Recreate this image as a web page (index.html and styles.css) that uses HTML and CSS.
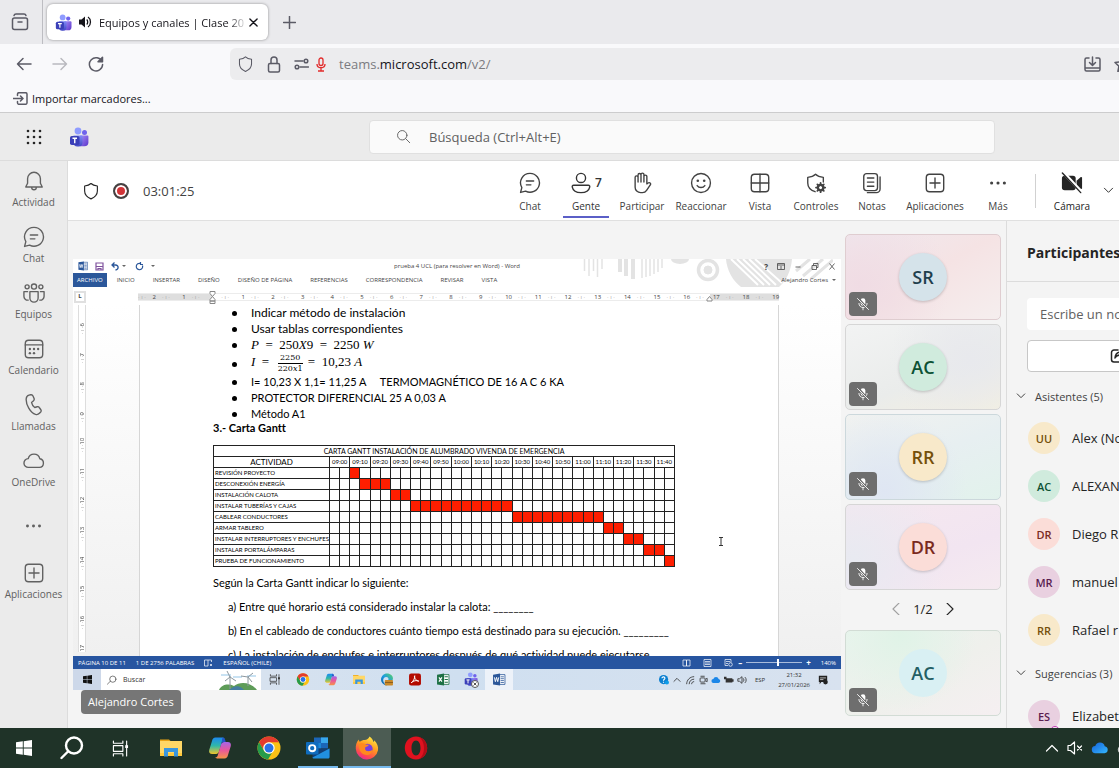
FILE: index.html
```html
<!DOCTYPE html>
<html lang="es">
<head>
<meta charset="utf-8">
<title>Equipos y canales | Clase</title>
<link rel="stylesheet" href="styles.css">
</head>
<body>
<svg class="sprite" aria-hidden="true">
  <defs>
    <linearGradient id="gTeams" x1="0" y1="0" x2="0" y2="1"><stop offset="0" stop-color="#7f8bf5"/><stop offset="1" stop-color="#4046c4"/></linearGradient>
    <linearGradient id="gPurple" x1="0" y1="0" x2="1" y2="1"><stop offset="0" stop-color="#a48cf8"/><stop offset="1" stop-color="#5b35c9"/></linearGradient>
    <linearGradient id="gCop1" x1="0" y1="0" x2="0" y2="1"><stop offset="0" stop-color="#1c8af0"/><stop offset=".5" stop-color="#2fb8a8"/><stop offset="1" stop-color="#f0c52c"/></linearGradient>
    <linearGradient id="gCop2" x1="0" y1="0" x2="0" y2="1"><stop offset="0" stop-color="#a565e8"/><stop offset=".5" stop-color="#e8589a"/><stop offset="1" stop-color="#f79447"/></linearGradient>
    <linearGradient id="gFire" x1=".8" y1="0" x2=".3" y2="1"><stop offset="0" stop-color="#fff04a"/><stop offset=".45" stop-color="#ff9a1f"/><stop offset=".8" stop-color="#ff4a4f"/><stop offset="1" stop-color="#e8269b"/></linearGradient>
    <linearGradient id="gEdge" x1="0" y1="1" x2="1" y2="0"><stop offset="0" stop-color="#0c59a4"/><stop offset=".5" stop-color="#1b9de2"/><stop offset="1" stop-color="#5fd65a"/></linearGradient>
    <linearGradient id="gCloud" x1="0" y1="0" x2="1" y2="1"><stop offset="0" stop-color="#1560d8"/><stop offset="1" stop-color="#35b8ff"/></linearGradient>
  </defs>
  <symbol id="i-teams" viewBox="0 0 20 20"><circle cx="15.500" cy="5.400" r="2.500" fill="#6f63ec"/><path d="M11 8.600h7.400c.6 0 1 .4 1 1v5.600a4 4 0 0 1-4 4H11z" fill="url(#gPurple)"/><circle cx="9" cy="4" r="3.400" fill="#8f9cff"/><path d="M4.500 8.600h8c.6 0 1 .4 1 1v6a4 4 0 0 1-4 4h-1a4 4 0 0 1-4-4z" fill="url(#gTeams)"/><rect x="1" y="9" width="9.500" height="9" rx="1.800" fill="#3a3fb8"/><path d="M3.500 11.300h4.500M5.750 11.300v5" stroke="#fff" stroke-width="1.400"/></symbol>
  <symbol id="i-bell" viewBox="0 0 24 24"><path d="M12 2.500a7 7 0 0 0-7 7v5L3 18.500h18l-2-4v-5a7 7 0 0 0-7-7zM9.500 19a2.500 2.500 0 0 0 5 0"/></symbol>
  <symbol id="i-chat" viewBox="0 0 24 24"><path d="M12 1.500A10.300 10.300 0 1 1 7.200 20.900L1.700 22.300l1.400-5.300A10.300 10.300 0 0 1 12 1.500zM8 9.800h8M8 14h5"/></symbol>
  <symbol id="i-people" viewBox="0 0 24 24"><circle cx="12" cy="5" r="2.800"/><circle cx="4.500" cy="5.300" r="2.200"/><circle cx="19.500" cy="5.300" r="2.200"/><path d="M7.500 10.500h9v7a4.500 4.500 0 0 1-9 0zM5 10.500H1v5a4.300 4.300 0 0 0 4.700 4.300M19 10.500h4v5a4.300 4.300 0 0 1-4.700 4.300"/></symbol>
  <symbol id="i-cal" viewBox="0 0 24 24"><rect x="2.500" y="2.500" width="19" height="19" rx="3.500"/><path d="M2.500 7.500h19"/><g fill="currentColor" stroke="none"><circle cx="7.500" cy="12" r="1.300"/><circle cx="12" cy="12" r="1.300"/><circle cx="16.500" cy="12" r="1.300"/><circle cx="7.500" cy="16.500" r="1.300"/><circle cx="12" cy="16.500" r="1.300"/></g></symbol>
  <symbol id="i-phone" viewBox="0 0 24 24"><path d="M6.500 1.300 8.500.8c1.200-.2 2 .4 2.400 1.300l1.200 2.900c.3.900.1 1.700-.6 2.300L9.300 9.200c.4 2 1.800 4.300 3.500 5.500l2.700-.8c.9-.2 1.700 0 2.200.8l1.800 2.500c.5.800.4 1.700-.2 2.400l-1.400 1.500c-1.100 1.200-2.700 1.600-4.200 1.200C8 20.500 3 11.500 3.500 5.200c.2-2 1.300-3.500 3-3.900z"/></symbol>
  <symbol id="i-cloud" viewBox="0 0 24 24"><path d="M6 19a4.800 4.800 0 0 1-.3-9.600A6.500 6.500 0 0 1 18.300 9.500 4.800 4.800 0 0 1 18 19z"/></symbol>
  <symbol id="i-more" viewBox="0 0 24 24"><g fill="currentColor" stroke="none"><circle cx="3.500" cy="12" r="2.100"/><circle cx="12" cy="12" r="2.100"/><circle cx="20.500" cy="12" r="2.100"/></g></symbol>
  <symbol id="i-plusbox" viewBox="0 0 24 24"><rect x="2.500" y="2.500" width="19" height="19" rx="3.500"/><path d="M12 6.500v11M6.500 12h11"/></symbol>
  <symbol id="i-person" viewBox="0 0 24 24"><circle cx="12" cy="6.500" r="5"/><path d="M4 14.500h16c1.300 0 1.800 1 1.500 2-.8 4-4.800 6-9.500 6s-8.700-2-9.500-6c-.3-1 .2-2 1.500-2z"/></symbol>
  <symbol id="i-hand" viewBox="0 0 24 24"><path d="M4.500 13V5.800a1.600 1.600 0 0 1 3.200 0V11 3.300a1.600 1.600 0 0 1 3.200 0V11 2.800a1.600 1.600 0 0 1 3.200 0V11 5a1.600 1.600 0 0 1 3.200 0V13l1.300-1c1.200-1 3.200 0 2.800 1.500L17 20a5.500 5.500 0 0 1-4.500 2.500h-2a6 6 0 0 1-6-6z"/></symbol>
  <symbol id="i-smile" viewBox="0 0 24 24"><circle cx="12" cy="12" r="10.300"/><path d="M7.800 14.800c2 2.800 6.400 2.800 8.400 0"/><g fill="currentColor" stroke="none"><circle cx="8.500" cy="9.500" r="1.400"/><circle cx="15.500" cy="9.500" r="1.400"/></g></symbol>
  <symbol id="i-grid" viewBox="0 0 24 24"><rect x="2.500" y="2.500" width="19" height="19" rx="3.500"/><path d="M12 2.500v19M2.500 12h19"/></symbol>
  <symbol id="i-shield" viewBox="0 0 24 24"><path d="M12 2c2 2 5 3 8.500 3.300V12c0 5.500-4 8.500-8.500 10.500C7.500 20.500 3.500 17.500 3.500 12V5.300C7 5 10 4 12 2z"/></symbol>
  <symbol id="i-shieldgear" viewBox="0 0 24 24"><path d="M11 21.500C6.500 20 3 17 3 12V5.800C6.500 5.500 9.500 4.500 11.500 2.500c2 2 5 3 8.500 3.300V11"/><circle cx="17" cy="17" r="3" stroke-width="2.600"/><path stroke-width="2" d="M17 12v2m0 6v2m-5-5h2m6 0h2m-8.500-3.500 1.500 1.500m4 4 1.500 1.500m0-7-1.500 1.500m-4 4-1.500 1.500"/></symbol>
  <symbol id="i-notes" viewBox="0 0 24 24"><rect x="3" y="1.800" width="15" height="18.500" rx="3"/><path d="M7 6.500h7M7 11h7M7 15.500h7M20.800 5.500v13a4 4 0 0 1-4 4H7"/></symbol>
  <symbol id="i-camoff" viewBox="0 0 24 24"><rect x="1" y="4" width="15" height="16" rx="3" fill="currentColor" stroke="none"/><path d="m17 9.500 4.600-4c.6-.4 1.400 0 1.400.7v11.600c0 .7-.8 1.100-1.400.7l-4.600-4z" fill="currentColor" stroke="none"/><path d="m3.500 1.500 19.500 21" stroke="#fff" stroke-width="3.500"/><path d="m1.500 1 20 21.500"/></symbol>
  <symbol id="i-chev" viewBox="0 0 12 12"><path d="m1.500 3.500 4.500 4.500 4.500-4.500"/></symbol>
  <symbol id="i-search" viewBox="0 0 24 24"><circle cx="10" cy="10" r="7.500"/><path d="m15.500 15.500 6.500 6.500"/></symbol>
  <symbol id="i-micoff" viewBox="0 0 24 24"><rect x="8" y="2" width="8" height="13" rx="4" fill="currentColor" stroke="none"/><path d="M5 11c0 4 3 7 7 7s7-3 7-7M12 18v4"/><path d="m3.500 2 18 20" stroke="#6e6e6e" stroke-width="4"/><path d="m2.500 2.500 19 19"/></symbol>
  <symbol id="i-win" viewBox="0 0 16 16"><path fill="currentColor" stroke="none" d="M0 2.200 6.800 1.300v6.300H0zM7.700 1.200 16 0v7.600H7.700zM0 8.400h6.800v6.300L0 13.800zM7.700 8.400H16V16l-8.300-1.200z"/></symbol>
  <symbol id="i-taskview" viewBox="0 0 18 18"><path d="M1.500 1v2.500h10V1M1.500 17v-2.500h10V17M1.500 6h10v6h-10zM15.500 1v16"/><path fill="currentColor" stroke="none" d="M14 5.500h3v3h-3z"/></symbol>
  <symbol id="i-folder" viewBox="0 0 24 24"><path fill="#e9a315" d="M1 3.500h9l2 2H1z"/><path fill="#ffd766" d="M1 5h22v15H1z"/><path fill="#ffc93c" d="M1 17h22v3H1z"/><path fill="#3a96dd" d="M5 12h14v8.500h-4V16H9v4.500H5z"/></symbol>
  <symbol id="i-copilot" viewBox="0 0 24 24"><path fill="url(#gCop1)" d="M15 1.500H7.500C5.500 1.500 4.500 3 4 5L1.200 14c-.6 2.600.8 4 3 4H8c1.500 0 2.500-1 3-2.500l3-10C14.400 4 14.500 2.500 17 2.500z"/><path fill="url(#gCop2)" d="M9 22.500h7.500c2 0 3-1.500 3.500-3.500l2.800-9c.6-2.600-.8-4-3-4H16c-1.500 0-2.500 1-3 2.500l-3 10c-.4 1.500-.5 3-3 3z"/><path fill="#2454c8" d="M14.500 1.500c2 0 2.600 1.500 3.200 4.500H16c-1.300 0-2.200.9-2.700 2.300z"/></symbol>
  <symbol id="i-chrome" viewBox="0 0 24 24"><circle cx="12" cy="12" r="11.500" fill="#fbc116"/><path fill="#e33b2e" d="M2 6.300A11.500 11.500 0 0 1 22 6.300H12a5.700 5.700 0 0 0-5 8.500z"/><path fill="#259b4b" d="M2 6.300 7 14.800a5.700 5.700 0 0 0 8 1.900L11 23.500A11.500 11.500 0 0 1 2 6.300z"/><circle cx="12" cy="12" r="5.700" fill="#fff"/><circle cx="12" cy="12" r="4.500" fill="#2a72e8"/></symbol>
  <symbol id="i-outlook" viewBox="0 0 24 24"><path fill="#1b66b8" d="M8 1.500h14v11H8z"/><path fill="#38a8ec" d="M15 1.500h7v5.500h-7z"/><path fill="#1a87d7" d="M8 7h7v5.500H8z"/><path fill="#123f75" d="M6.500 12.500h17v9h-17z"/><path fill="#2190df" d="m6.500 21.500 17-9v8.500c0 .8-.5 1.500-1.500 1.500H8c-.9 0-1.500-.4-1.500-1z"/><rect x="0" y="6" width="12.500" height="12.500" rx="1" fill="#0f6cbd"/><circle cx="6.200" cy="12.200" r="3.100" fill="none" stroke="#fff" stroke-width="1.900"/></symbol>
  <symbol id="i-firefox" viewBox="0 0 24 24"><path fill="url(#gFire)" d="M14.500.5c3 2 3.500 4 4 5.500 0 0 .8-.5.700-1.800 3 3 4.300 6 3.800 10A11.200 11.200 0 0 1 .8 13c-.3-4 .7-7 3-9.500.2 1.500.6 2 1 2.300C6.500 4.500 8 4 9.500 4 12 4 13.500 2.500 14.500.5z"/><circle cx="12.500" cy="13" r="5.200" fill="#7540e0"/><path fill="#ff8a1e" d="M4 8.500c2-1.800 4.500-1.500 6-.5 1 .7 2.500.8 4 .8-1 1.700-2.500 2-3.500 2.200-1.200 2.500.5 4.200 2.800 4.200 2 0 3-.8 4.500-1.200-.5 3-3 5-6 5-4.500 0-8.300-4-7.800-10.500z"/></symbol>
  <symbol id="i-opera" viewBox="0 0 24 24"><path fill="#e0121f" fill-rule="evenodd" d="M12 .5C5.500.5.800 5.600.8 12S5.500 23.500 12 23.500 23.200 18.400 23.200 12 18.500.5 12 .5zm0 4c2.800 0 4.500 3.300 4.500 7.500s-1.700 7.500-4.500 7.500S7.500 16.200 7.500 12 9.200 4.500 12 4.500z"/><path fill="#b00c17" fill-rule="evenodd" d="M15 .9c4.700 1.300 8.200 5.800 8.200 11.100S19.700 21.800 15 23.100c3-2 5-6.200 5-11.100S18 2.900 15 .9z"/></symbol>
  <symbol id="i-edge" viewBox="0 0 24 24"><path fill="url(#gEdge)" d="M12 1C18.500 1 23 5.500 23 10c0 3.500-2.500 5.500-5.500 5.500-2.500 0-3.500-1-3.500-1.800 0-.7.8-1 .8-2.700 0-2-1.800-3.700-4.300-3.700-3.500 0-5.500 3-5.500 6.200 0 5 4 8.500 8 9.300C6 23 1 18 1 12S6 1 12 1z"/><rect x="8" y="13" width="15" height="10" rx="1.500" fill="#c98a2b"/><path fill="#7d5417" d="M8 17h15v1.500H8z"/></symbol>
  <symbol id="i-acrobat" viewBox="0 0 24 24"><rect x="1" y="1" width="22" height="22" rx="4" fill="#b30b00"/><path fill="none" stroke="#fff" stroke-width="1.800" d="M5 18c3-1 7.500-9 6.500-13-2 2 2 10 7.500 10-4-2-10-1-14 3z"/></symbol>
  <symbol id="i-excel" viewBox="0 0 24 24"><path fill="#fff" stroke="#1e7145" stroke-width="1.500" d="M12 3h11v18H12z"/><path stroke="#1e7145" stroke-width="2" d="M15 7h6M15 12h6M15 17h6"/><path fill="#1e7145" d="m1 3 13-2v22L1 21z"/><path stroke="#fff" stroke-width="2.200" d="m4.500 8 5.500 8m0-8-5.500 8"/></symbol>
  <symbol id="i-word" viewBox="0 0 24 24"><path fill="#fff" stroke="#2b579a" stroke-width="1.500" d="M12 3h11v18H12z"/><path stroke="#2b579a" stroke-width="1.500" d="M15 7h6M15 10.500h6M15 14h6M15 17.500h6"/><path fill="#2b579a" d="m1 3 13-2v22L1 21z"/><path fill="none" stroke="#fff" stroke-width="1.700" d="m3.500 8 1.800 8L7.500 8l2.200 8 1.800-8"/></symbol>
</svg>

<header class="browser">
  <div class="tabstrip">
    <button class="recent" aria-label="Pestañas recientes"><svg class="ln" width="18" height="18" viewBox="0 0 18 18"><rect x="1.500" y="5" width="15" height="11.500" rx="2"/><path d="M3 2.500C3.300 1.500 4 1 5 1h8c1 0 1.700.5 2 1.500M7 9h4"/></svg></button>
    <div class="tab">
      <svg width="17" height="17"><use href="#i-teams"/></svg>
      <svg class="sound" width="14" height="14" viewBox="0 0 14 14"><path fill="#15141a" d="M1 4.500h2.500L7 1.500v11L3.500 9.500H1z"/><path fill="none" stroke="#15141a" stroke-width="1.300" d="M8.700 4.500c1.300 1.200 1.300 3.800 0 5M10 2c3.300 2.200 3.300 7.800 0 10"/></svg>
      <span class="tab-title">Equipos y canales | Clase 20</span>
      <button class="tab-close" aria-label="Cerrar"><svg class="ln" width="9" height="9" viewBox="0 0 10 10"><path d="m1 1 8 8M9 1 1 9"/></svg></button>
    </div>
    <button class="newtab" aria-label="Nueva pestaña"><svg class="ln" width="13" height="13" viewBox="0 0 13 13"><path d="M6.500.5v12M.5 6.500h12"/></svg></button>
  </div>
  <div class="navbar">
    <button aria-label="Atrás"><svg class="ln" width="16" height="14" viewBox="0 0 16 14"><path d="M15 7H1.500M7 1.500 1.500 7 7 12.500"/></svg></button>
    <button class="off" aria-label="Adelante"><svg class="ln" width="16" height="14" viewBox="0 0 16 14"><path d="M1 7h13.500M9 1.500 14.500 7 9 12.500"/></svg></button>
    <button aria-label="Recargar"><svg class="ln" width="16" height="16" viewBox="0 0 16 16"><path d="M14 5.500A6.600 6.600 0 1 0 14.600 8.500"/><path fill="currentColor" d="M14.500 1.200v4.500H10z"/></svg></button>
    <div class="urlbar">
      <svg class="ln" width="17" height="18"><use href="#i-shield"/></svg>
      <svg class="ln" width="14" height="17" viewBox="0 0 14 17"><rect x="1.500" y="7.500" width="11" height="8.500" rx="1.500"/><path d="M4 7.500V4a3 3 0 0 1 6 0v3.500"/></svg>
      <svg class="ln" width="15" height="12" viewBox="0 0 15 12"><path d="M1 3h8M6 9h8.500"/><circle cx="12" cy="3" r="1.800"/><circle cx="3" cy="9" r="1.800"/></svg>
      <svg class="mic" width="10" height="15" viewBox="0 0 10 15"><rect x="3" y="1" width="4" height="7.500" rx="2"/><path d="M1 7c0 5 8 5 8 0M5 11v3M2 14h6"/></svg>
      <span class="url">teams.<b>microsoft.com</b>/v2/</span>
      <svg class="ln save" width="17" height="16" viewBox="0 0 17 16"><path d="M5 2H2.500A1.500 1.500 0 0 0 1 3.500v10A1.500 1.500 0 0 0 2.500 15h12a1.500 1.500 0 0 0 1.500-1.500v-10A1.500 1.500 0 0 0 14.500 2H12M1 12h15M8.500 1v8M5.500 6.500l3 3 3-3"/></svg>
      <svg class="ln" width="17" height="16" viewBox="0 0 17 16"><path d="m8.500 1 2.200 4.800 5.300.7-3.900 3.700 1 5.300-4.600-2.600-4.600 2.600 1-5.300L1 6.500l5.300-.7z"/></svg>
    </div>
  </div>
  <div class="bookmarks">
    <svg class="ln" width="15" height="13" viewBox="0 0 15 13"><path d="M4.500 3.500V2A1.500 1.500 0 0 1 6 .7h6.500A1.500 1.500 0 0 1 14 2v9a1.500 1.500 0 0 1-1.500 1.300H6A1.500 1.500 0 0 1 4.500 11V9.500M0 6.500h10M7.500 4 10 6.500 7.500 9"/></svg>
    <a href="#">Importar marcadores...</a>
  </div>
</header>

<div class="appbar">
  <button aria-label="Aplicaciones"><svg width="16" height="16" viewBox="0 0 16 16" fill="#242424"><circle cx="2" cy="2" r="1.300"/><circle cx="8" cy="2" r="1.300"/><circle cx="14" cy="2" r="1.300"/><circle cx="2" cy="8" r="1.300"/><circle cx="8" cy="8" r="1.300"/><circle cx="14" cy="8" r="1.300"/><circle cx="2" cy="14" r="1.300"/><circle cx="8" cy="14" r="1.300"/><circle cx="14" cy="14" r="1.300"/></svg></button>
  <svg class="logo" width="20" height="20"><use href="#i-teams"/></svg>
  <label class="search"><svg class="ln" width="15" height="15"><use href="#i-search"/></svg><input type="search" aria-label="Búsqueda" placeholder="Búsqueda (Ctrl+Alt+E)"></label>
</div>

<div class="app">
  <nav class="rail">
    <button><svg class="ln"><use href="#i-bell"/></svg>Actividad</button>
    <button><svg class="ln"><use href="#i-chat"/></svg>Chat</button>
    <button><svg class="ln"><use href="#i-people"/></svg>Equipos</button>
    <button><svg class="ln"><use href="#i-cal"/></svg>Calendario</button>
    <button><svg class="ln"><use href="#i-phone"/></svg>Llamadas</button>
    <button><svg class="ln"><use href="#i-cloud"/></svg>OneDrive</button>
    <button class="dots" aria-label="Más"><svg class="ln"><use href="#i-more"/></svg></button>
    <button><svg class="ln"><use href="#i-plusbox"/></svg>Aplicaciones</button>
  </nav>

  <div class="meeting">
    <div class="toolbar">
      <svg class="ln" width="18" height="18"><use href="#i-shield"/></svg>
      <span class="rec"></span>
      <span class="timer">03:01:25</span>
      <div class="actions">
        <button><svg class="ln"><use href="#i-chat"/></svg>Chat</button>
        <button class="current"><span><svg class="ln"><use href="#i-person"/></svg><b>7</b></span>Gente</button>
        <button><svg class="ln"><use href="#i-hand"/></svg>Participar</button>
        <button class="w62"><svg class="ln"><use href="#i-smile"/></svg>Reaccionar</button>
        <button><svg class="ln"><use href="#i-grid"/></svg>Vista</button>
        <button><svg class="ln"><use href="#i-shieldgear"/></svg>Controles</button>
        <button><svg class="ln"><use href="#i-notes"/></svg>Notas</button>
        <button class="w70"><svg class="ln"><use href="#i-plusbox"/></svg>Aplicaciones</button>
        <button><svg class="ln small"><use href="#i-more"/></svg>Más</button>
      </div>
      <div class="devices">
        <button class="cam"><svg class="ln"><use href="#i-camoff"/></svg>Cámara</button>
        <button class="open" aria-label="Opciones de cámara"><svg class="ln"><use href="#i-chev"/></svg></button>
      </div>
    </div>

    <div class="body">
      <main class="stage">
        <div class="share">
          <div class="word">
            <svg class="decor" viewBox="0 0 250 28" fill="none" stroke="#e3e3e3"><path stroke-width="1.500" d="M1.500 0v12M6 0v17M10.500 0v12M14.500 0v18M19 0v10"/><path stroke-width="4" d="M37 0v13M43 0v17M50 0v20"/><path stroke-width="1.500" d="M59 0v19M63 0v18M67 0v17M71 0v15M75 0v13M79 0v9"/><path fill="#e3e3e3" stroke="none" d="M88 0h18a9 5 0 0 1-18 0z"/><circle cx="125" cy="11" r="9.500" stroke-width="3.500"/><circle cx="125" cy="11" r="4" fill="#e3e3e3"/><path fill="#e3e3e3" stroke="none" d="M143 0h66c-1 12-6 22-13 28h-38c-8-6-14-16-15-28z"/><path stroke="#fff" stroke-width="2" d="m148 0 27 26M154 0l27 26M160 0l27 26M166 0l27 26M172 0l27 24"/><path stroke-width="3" d="m213 12 14-12M220 17l20-17M228 20l22-19"/></svg>
            <div class="titlebar">
              <div class="quick">
                <svg width="10" height="10"><use href="#i-word"/></svg>
                <svg width="9" height="9" viewBox="0 0 9 9"><path fill="none" stroke="#80539e" stroke-width="1.200" d="M1 1h7v7H1zM1 4.500h7M3 8V6.500h3V8"/></svg>
                <svg width="8" height="9" viewBox="0 0 8 9"><path fill="none" stroke="#2b579a" stroke-width="1.300" d="M3.500.5 1 3l2.500 2.500M1 3h3.500c3.500 0 3.500 4.500 0 5"/></svg>
                <i class="caret"></i>
                <svg class="redo" width="9" height="9" viewBox="0 0 9 9"><path fill="none" stroke="#2b579a" stroke-width="1.200" d="M5.500 1.500a3.200 3.200 0 1 0 2 2M5.500 0v2.500h2.500"/></svg>
                <i class="caret"></i>
              </div>
              <span>prueba 4 UCL (para resolver en Word) - Word</span>
              <div class="winctl"><b>?</b><svg width="8" height="7" viewBox="0 0 8 7"><path d="M.5.5h7v6h-7zM.5 2h7M4 3v3"/></svg><svg width="8" height="7" viewBox="0 0 8 7"><path d="M1.500 4h5"/></svg><svg width="8" height="7" viewBox="0 0 8 7"><path d="M1 2.500h4.500v4H1zM2.500 2.500v-2H7v4H5.500"/></svg><svg width="8" height="7" viewBox="0 0 8 7"><path d="m1.500.5 5 6m0-6-5 6"/></svg></div>
            </div>
            <div class="ribbon"><b>ARCHIVO</b><span>INICIO</span><span>INSERTAR</span><span>DISEÑO</span><span>DISEÑO DE PÁGINA</span><span>REFERENCIAS</span><span>CORRESPONDENCIA</span><span>REVISAR</span><span>VISTA</span><span class="user">Alejandro Cortes</span><i class="caret"></i></div>
            <div class="hruler">
              <i class="tabstop">L</i>
              <ol><li class="part">2<li>1<li class="zero">&nbsp;<li>1<li>2<li>3<li>4<li>5<li>6<li>7<li>8<li>9<li>10<li>11<li>12<li>13<li>14<li>15<li>16<li>17<li>18<li>19</ol>
              <svg class="indent" width="7" height="13" viewBox="0 0 7 13"><path fill="#fff" stroke="#888" d="M1 .5h5v2L3.500 5.500 1 2.500zM1 10V8.500L3.500 5.500 6 8.500V10zM1 10h5v2.500H1z"/></svg>
              <svg class="indent right" width="7" height="13" viewBox="0 0 7 13"><path fill="#fff" stroke="#888" d="M1 10V8.500L3.500 5.500 6 8.500V10z"/></svg>
            </div>
            <div class="canvas">
              <ol class="vruler"><li>6<li>7<li>8<li>9<li>10<li>11<li>12<li>13<li>14<li>15<li>16<li>17</ol>
              <article class="page">
                <ul>
                  <li class="big">Indicar método de instalación</li>
                  <li class="big">Usar tablas correspondientes</li>
                  <li><span class="math"><em>P</em> &nbsp;=&nbsp; 250<em>X</em>9 &nbsp;=&nbsp; 2250 <em>W</em></span></li>
                  <li class="tall"><span class="math"><em>I</em> &nbsp;=&nbsp; <span class="frac"><span>2250</span><span>220<em>x</em>1</span></span> = &nbsp;10,23 <em>A</em></span></li>
                  <li>I= 10,23 X 1,1= 11,25 A &nbsp; &nbsp; TERMOMAGNÉTICO DE 16 A C 6 KA</li>
                  <li>PROTECTOR DIFERENCIAL 25 A 0,03 A</li>
                  <li>Método A1</li>
                </ul>
                <h3>3.- Carta Gantt</h3>
                <table class="gantt">
                  <colgroup><col class="name"><col span="34"></colgroup>
                  <thead>
                  <tr><th colspan="35">CARTA GANTT INSTALACIÓN DE ALUMBRADO VIVENDA DE EMERGENCIA</th></tr>
                  <tr class="hours"><th class="act">ACTIVIDAD<th colspan="2">09:00<th colspan="2">09:10<th colspan="2">09:20<th colspan="2">09:30<th colspan="2">09:40<th colspan="2">09:50<th colspan="2">10:00<th colspan="2">10:10<th colspan="2">10:20<th colspan="2">10:30<th colspan="2">10:40<th colspan="2">10:50<th colspan="2">11:00<th colspan="2">11:10<th colspan="2">11:20<th colspan="2">11:30<th colspan="2">11:40</tr>
                  </thead>
                  <tbody>
                  <tr><th>REVISIÓN PROYECTO<td><td><td class="r"><td><td><td><td><td><td><td><td><td><td><td><td><td><td><td><td><td><td><td><td><td><td><td><td><td><td><td><td><td><td><td></tr>
                  <tr><th>DESCONEXIÓN ENERGÍA<td><td><td><td class="r"><td class="r"><td class="r"><td><td><td><td><td><td><td><td><td><td><td><td><td><td><td><td><td><td><td><td><td><td><td><td><td><td><td><td></tr>
                  <tr><th>INSTALACIÓN CALOTA<td><td><td><td><td><td><td class="r"><td class="r"><td><td><td><td><td><td><td><td><td><td><td><td><td><td><td><td><td><td><td><td><td><td><td><td><td><td></tr>
                  <tr><th>INSTALAR TUBERÍAS Y CAJAS<td><td><td><td><td><td><td><td><td class="r"><td class="r"><td class="r"><td class="r"><td class="r"><td class="r"><td class="r"><td class="r"><td class="r"><td class="r"><td><td><td><td><td><td><td><td><td><td><td><td><td><td><td><td></tr>
                  <tr><th>CABLEAR CONDUCTORES<td><td><td><td><td><td><td><td><td><td><td><td><td><td><td><td><td><td><td class="r"><td class="r"><td class="r"><td class="r"><td class="r"><td class="r"><td class="r"><td class="r"><td class="r"><td><td><td><td><td><td><td></tr>
                  <tr><th>ARMAR TABLERO<td><td><td><td><td><td><td><td><td><td><td><td><td><td><td><td><td><td><td><td><td><td><td><td><td><td><td><td class="r"><td class="r"><td><td><td><td><td></tr>
                  <tr><th>INSTALAR INTERRUPTORES Y ENCHUFES<td><td><td><td><td><td><td><td><td><td><td><td><td><td><td><td><td><td><td><td><td><td><td><td><td><td><td><td><td><td class="r"><td class="r"><td><td><td></tr>
                  <tr><th>INSTALAR PORTALÁMPARAS<td><td><td><td><td><td><td><td><td><td><td><td><td><td><td><td><td><td><td><td><td><td><td><td><td><td><td><td><td><td><td><td class="r"><td class="r"><td></tr>
                  <tr><th>PRUEBA DE FUNCIONAMIENTO<td><td><td><td><td><td><td><td><td><td><td><td><td><td><td><td><td><td><td><td><td><td><td><td><td><td><td><td><td><td><td><td><td><td class="r"></tr>
                  </tbody>
                </table>
                <p>Según la Carta Gantt indicar lo siguiente:</p>
                <p class="q">a) Entre qué horario está considerado instalar la calota: ________</p>
                <p class="q">b) En el cableado de conductores cuánto tiempo está destinado para su ejecución. _________</p>
                <p class="q">c) La instalación de enchufes e interruptores después de qué actividad puede ejecutarse</p>
              </article>
              <svg class="ibeam" width="6" height="9" viewBox="0 0 6 9"><path fill="none" stroke="#333" d="M1 .5h4M3 .5v8M1 8.500h4"/></svg>
            </div>
            <div class="status">
              <span>PÁGINA 10 DE 11</span><span>1 DE 2756 PALABRAS</span>
              <svg width="9" height="8" viewBox="0 0 9 8"><path d="M.5 1h3.500v6H.5zM4 1h3.500v2M6 5l2 2m0-2L6 7"/></svg>
              <span>ESPAÑOL (CHILE)</span>
              <div class="views"><svg width="9" height="8" viewBox="0 0 9 8"><path d="M1 1h3.500v6H1zM4.500 1H8v6H4.500z"/></svg><svg width="9" height="8" viewBox="0 0 9 8"><path d="M1 .5h7v7H1zM2 2.500h5M2 4h5M2 5.500h5"/></svg><svg width="9" height="8" viewBox="0 0 9 8"><path d="M1 .5h6v3M1 .5v6h3M2 2.500h4M2 4.500h2"/><circle cx="6.500" cy="5.500" r="1.800"/></svg></div>
              <b>–</b><i class="zoom"></i><b>+</b><span class="pct">140%</span>
            </div>
            <div class="rtask">
              <span class="start"><svg width="9" height="9"><use href="#i-win"/></svg></span>
              <span class="rsearch"><svg class="ln" width="10" height="10" viewBox="0 0 24 24"><circle cx="14" cy="10" r="7.500"/><path d="m8 15-7 7"/></svg>Buscar
                <svg class="mill" width="40" height="19" viewBox="0 0 40 19"><path fill="#c9e2f3" d="M2 3h10v2H2zM14 5h9v2h-9zM28 4h9v2h-9z"/><path fill="#5e9c58" d="M0 19c2-5 9-7 15-4 6-5 17-4 23 4z"/><path fill="#447da1" d="M10 19c4-4 9-5 13-2l2 2z"/><path fill="none" stroke="#8c979e" d="M11 18V5M11 6 8 0M11 6l6 4M11 6 6 10M29 15V6M29 6l5-4M29 6l4 5M29 6l-7-1"/></svg></span>
              <span class="apps"><svg class="ln"><use href="#i-taskview"/></svg><svg><use href="#i-chrome"/></svg><svg><use href="#i-copilot"/></svg><svg><use href="#i-folder"/></svg><svg><use href="#i-edge"/></svg><svg><use href="#i-acrobat"/></svg><svg><use href="#i-excel"/></svg><svg viewBox="0 0 28 21"><use href="#i-teams" x="7" y="3" width="14" height="14"/><circle cx="18" cy="15" r="3.500" fill="#fff" stroke="#555"/><path stroke="#555" d="m16.500 13.500 3 3m0-3-3 3"/></svg><svg class="sel"><use href="#i-word"/></svg></span>
              <span class="tray">
                <svg viewBox="0 0 12 12"><circle cx="5.500" cy="5.500" r="5.500" fill="#0b7fd0"/><path fill="none" stroke="#fff" stroke-width="1.400" d="M3.500 4c0-2.500 4-2 3.500.2C6.700 5.300 5.400 5.200 5.400 7M5.400 8v1.200"/><circle cx="9.500" cy="9" r="2.500" fill="#0b9be8"/></svg>
                <svg viewBox="0 0 12 12"><path class="s" d="m2 8 4-4 4 4"/></svg>
                <svg viewBox="0 0 12 12"><path class="s" d="M2 11C2 6 6 2 11 2M5 11c0-3.500 2.500-6 6-6M8 11c0-2 1-3 3-3"/></svg>
                <svg viewBox="0 0 12 12"><rect class="s" x="2.500" y="3.500" width="6" height="5" rx="1"/><path class="s" d="M3 1.500h5M3 10.500h6M9 5l2-1v4L9 7"/></svg>
                <svg viewBox="0 0 24 24" fill="#1b86e8"><use href="#i-cloud"/></svg>
                <svg viewBox="0 0 12 12"><path fill="#333" d="M2 4h8v5H2zM10 5h1.500v3H10zM0 2h3v3H0z"/></svg>
                <svg viewBox="0 0 12 12"><path class="s" d="M1 4.500h2L6 2v8L3 7.500H1zM7.500 4c1 1 1 3 0 4M9.500 2.500c2 2 2 5 0 7"/></svg>
                <em>ESP</em><em class="clock">21:32<br>27/01/2026</em>
                <svg viewBox="0 0 12 12"><path fill="#222" d="M1 1h10v5L8 8.500H4L2 11V8.500H1z"/><path stroke="#fff" stroke-width=".8" d="M2.500 3.500h7M2.500 5.500h4"/><circle cx="9" cy="8.500" r="2.800" fill="#222"/></svg>
              </span>
            </div>
          </div>
          <span class="presenter">Alejandro Cortes</span>
        </div>
      </main>

      <aside class="tiles">
        <div class="tile t1"><span class="avatar sr">SR</span><i class="muted"><svg class="ln"><use href="#i-micoff"/></svg></i></div>
        <div class="tile t2"><span class="avatar ac">AC</span><i class="muted"><svg class="ln"><use href="#i-micoff"/></svg></i></div>
        <div class="tile t3"><span class="avatar rr">RR</span><i class="muted"><svg class="ln"><use href="#i-micoff"/></svg></i></div>
        <div class="tile t4"><span class="avatar dr">DR</span><i class="muted"><svg class="ln"><use href="#i-micoff"/></svg></i></div>
        <div class="pager"><button class="off" aria-label="Anterior"><svg class="ln" width="12" height="12" viewBox="0 0 12 12"><path d="M9 0 3 6l6 6"/></svg></button>1/2<button aria-label="Siguiente"><svg class="ln" width="12" height="12" viewBox="0 0 12 12"><path d="m3 0 6 6-6 6"/></svg></button></div>
        <div class="tile t5"><span class="avatar me">AC</span><i class="muted"><svg class="ln"><use href="#i-micoff"/></svg></i></div>
      </aside>

      <aside class="people">
        <h2>Participantes</h2>
        <div class="people-in">
          <input type="text" aria-label="Invitar" placeholder="Escribe un no">
          <button class="invite" aria-label="Compartir invitación"><svg class="ln" width="16" height="16" viewBox="0 0 16 16"><path d="M8 2H4a2.500 2.500 0 0 0-2.500 2.500v7A2.500 2.500 0 0 0 4 14h7.500a2.500 2.500 0 0 0 2.500-2.500V11M10.500 2l4 3.500-4 3.500V7C8 7 6 8 5 10c.3-3.500 2.500-6 5.500-6z"/></svg></button>
          <h4><svg class="ln"><use href="#i-chev"/></svg>Asistentes (5)</h4>
          <ul>
            <li><span class="avatar rr">UU</span>Alex (No</li>
            <li><span class="avatar ac">AC</span>ALEXAN</li>
            <li><span class="avatar dr">DR</span>Diego R</li>
            <li><span class="avatar mr">MR</span>manuel</li>
            <li><span class="avatar rr">RR</span>Rafael r</li>
          </ul>
          <h4><svg class="ln"><use href="#i-chev"/></svg>Sugerencias (3)</h4>
          <ul><li><span class="avatar mr">ES<i class="presence"></i></span>Elizabet</li></ul>
        </div>
      </aside>
    </div>
  </div>
</div>

<footer class="taskbar">
  <button aria-label="Inicio"><svg width="16" height="16"><use href="#i-win"/></svg></button>
  <button aria-label="Buscar"><svg class="ln find" width="24" height="24" viewBox="0 0 24 24"><circle cx="14" cy="9.500" r="8"/><path d="M8 15.500 1.500 22"/></svg></button>
  <button aria-label="Vista de tareas"><svg class="ln thin" width="17" height="17"><use href="#i-taskview"/></svg></button>
  <div class="pinned">
    <button aria-label="Explorador"><svg><use href="#i-folder"/></svg></button>
    <button aria-label="Copilot"><svg><use href="#i-copilot"/></svg></button>
    <button aria-label="Chrome"><svg><use href="#i-chrome"/></svg></button>
    <button class="running" aria-label="Outlook"><svg><use href="#i-outlook"/></svg></button>
    <button class="active" aria-label="Firefox"><svg><use href="#i-firefox"/></svg></button>
    <button aria-label="Opera"><svg><use href="#i-opera"/></svg></button>
  </div>
  <div class="systray">
    <svg class="ln thin" width="14" height="14" viewBox="0 0 14 14"><path d="m1.500 10 5.500-5.500 5.500 5.500"/></svg>
    <svg class="ln thin" width="16" height="14" viewBox="0 0 16 14"><path d="M1 4.500h2.500L7.500 1v12L3.500 9.500H1zM10.500 5l4 4m0-4-4 4"/></svg>
    <svg width="18" height="18" viewBox="0 0 24 24" fill="url(#gCloud)"><use href="#i-cloud"/></svg>
    <svg width="18" height="18" viewBox="0 0 24 24" fill="#c8c8c8"><use href="#i-cloud"/></svg>
  </div>
</footer>
</body>
</html>
```
FILE: styles.css
```css
* { box-sizing: border-box; }
html, body { height: 100%; }
body {
  margin: 0;
  display: flex;
  flex-direction: column;
  overflow: hidden;
  font-family: "Open Sans", "Noto Sans", sans-serif;
  font-size: 12px;
  color: #242424;
  background: #f5f5f5;
}
button {
  font: inherit;
  color: inherit;
  background: none;
  border: 0;
  padding: 0;
  display: flex;
  align-items: center;
  justify-content: center;
}
ul, ol { list-style: none; margin: 0; padding: 0; }
h2, h3, h4, p { margin: 0; }
svg { flex: none; }
.sprite { position: absolute; width: 0; height: 0; }
.ln { fill: none; stroke: currentColor; stroke-width: 1.5; stroke-linecap: round; stroke-linejoin: round; }
.thin { stroke-width: 1.2; }

/* Browser */
.browser { flex: none; color: #5b5b66; background: #f9f9fb; border-bottom: 1px solid #cccccd; }
.tabstrip { height: 44px; display: flex; align-items: center; background: #eaeaed; }
.recent { width: 43px; height: 44px; padding-right: 3px; border-right: 1px solid #bdbdc2; }
.tab {
  width: 221px; height: 36px; margin-left: 4px; padding: 0 9px 0 8px;
  display: flex; align-items: center;
  background: #fff; border-radius: 6px; box-shadow: 0 0 3px rgba(0,0,0,.4);
  color: #15141a;
}
.sound { margin-left: 6px; }
.tab-title {
  flex: 1; margin-left: 7px; overflow: hidden; white-space: nowrap; font-size: 11px;
  mask-image: linear-gradient(to right, #000 88%, transparent);
}
.tab-close { width: 12px; }
.newtab { margin-left: 15px; width: 13px; }
.navbar { height: 36px; padding-top: 4px; display: flex; }
.navbar > button { width: 36px; }
.navbar > button:first-child { margin-left: 6px; }
.off { opacity: .4; }
.urlbar {
  flex: 1; height: 32px; margin-left: 116px; margin-right: -12px; padding-left: 7px;
  display: flex; align-items: center; gap: 13px; overflow: hidden;
  background: #ececee; border-radius: 6px 0 0 6px;
}
.mic { margin-left: -6px; fill: none; stroke: #e22b2b; stroke-width: 1.3; }
.url { font-size: 13px; color: #7b7b80; }
.url b { font-weight: 400; color: #15141a; }
.save { margin-left: auto; }
.bookmarks { height: 32px; padding: 5px 0 0 13px; display: flex; align-items: center; gap: 4px; }
.bookmarks a { color: #15141a; text-decoration: none; font-size: 11px; }

/* Teams header */
.appbar { flex: none; height: 48px; display: flex; align-items: center; background: #ebebeb; border-bottom: 1px solid #dcdcdc; }
.appbar button { width: 68px; height: 47px; }
.search {
  flex: 1; max-width: 626px; height: 34px; margin: 0 auto 0 280px; padding-left: 26px;
  display: flex; align-items: center; gap: 18px;
  background: #fafafa; border: 1px solid #e0e0e0; border-radius: 4px; color: #616161;
}
.logo { margin-left: 1px; }
.search input, .people input { flex: 1; font: inherit; border: 0; outline: 0; background: none; padding: 0; }
.search input { font-size: 13px; }
input::placeholder { color: #616161; opacity: 1; }

.app { flex: 1; min-height: 0; display: flex; }
.rail { width: 68px; flex: none; background: #ebebeb; border-right: 1px solid #dcdcdc; display: flex; flex-direction: column; padding-top: 1px; }
.rail button { height: 56px; flex-direction: column; gap: 2px; font-size: 10px; line-height: 16px; color: #616161; }
.rail svg { width: 22px; height: 22px; }
.rail .dots svg { width: 17px; }

.meeting { flex: 1; min-width: 0; display: flex; flex-direction: column; }
.toolbar { flex: none; height: 60px; padding-left: 14px; display: flex; align-items: center; background: #fff; border-bottom: 1px solid #e0e0e0; color: #242424; overflow: hidden; }
.rec { width: 16px; height: 16px; margin: 0 14px 0 13px; border: 2px solid #424242; border-radius: 50%; background: #d13438; box-shadow: inset 0 0 0 2px #fff; }
.timer { font-size: 13px; color: #424242; }
.actions { margin-left: auto; display: flex; height: 100%; }
.actions button, .cam { width: 56px; padding-top: 4px; flex-direction: column; gap: 4px; font-size: 10px; line-height: 16px; white-space: nowrap; position: relative; }
.actions svg, .cam svg { width: 22px; height: 22px; }
.actions .small { width: 18px; }
.actions .w62 { width: 62px; }
.actions .w70 { width: 70px; }
.actions button { color: #424242; }
.actions .current { color: #333; }
.actions .current::after { content: ""; position: absolute; left: 5px; right: 5px; bottom: 2px; height: 2px; background: #5b5fc7; }
.actions .current span { display: flex; gap: 3px; align-items: center; }
.actions .current b { font-size: 12px; font-weight: 600; }
.devices { display: flex; align-items: center; height: 34px; margin: 0 3px 0 9px; padding-left: 8px; border-left: 1px solid #d1d1d1; }
.open { width: 16px; }
.open svg { width: 11px; height: 11px; stroke-width: 1; }

.body { flex: 1; min-height: 0; display: flex; background: #f4f4f4; }
.stage { flex: 1; min-width: 0; padding: 0 4px 0 5px; display: flex; align-items: center; }
.share { width: 100%; position: relative; }
.presenter {
  position: absolute; left: 8px; top: 100%; height: 24px; padding: 0 7px;
  line-height: 24px; font-size: 11px; color: #fff; background: #767676; border-radius: 4px; white-space: nowrap;
}

/* Shared Word window */
.word { position: relative; aspect-ratio: 768 / 431; display: flex; flex-direction: column; background: #fff; overflow: hidden; font-family: "Open Sans", sans-serif; font-size: 6px; color: #444; }
.decor { position: absolute; right: 8px; top: 0; width: 250px; height: 28px; }
.titlebar { position: relative; flex: none; height: 14px; display: grid; grid-template-columns: 1fr auto 1fr; align-items: center; }
.quick { display: flex; align-items: center; gap: 7px; padding-left: 5px; }
.caret { width: 4px; height: 2px; background: #666; clip-path: polygon(0 0, 100% 0, 50% 100%); }
.quick .caret { margin-left: -4px; }
.quick .redo { margin-left: 2px; }
.quick .redo + .caret { margin-left: 0; }
.winctl { display: flex; justify-content: flex-end; align-items: center; gap: 9px; padding-right: 5px; }
.winctl svg { fill: none; stroke: #444; stroke-width: .8; }
.winctl b { font-size: 8px; }
.ribbon { position: relative; flex: none; height: 14px; display: flex; align-items: center; gap: 18px; white-space: nowrap; }
.ribbon b { align-self: stretch; line-height: 14px; padding: 0 4px; margin-right: -8px; font-weight: 400; color: #fff; background: #2b579a; }
.ribbon .user { margin-left: auto; }
.ribbon .caret { margin: 0 5px 0 -14px; }
.hruler { position: relative; flex: none; height: 18px; display: flex; align-items: center; padding: 2px 0 0 1px; }
.tabstop { width: 12px; height: 12px; border: 2px solid #e0e0e0; text-align: center; line-height: 7px; font-weight: 700; font-style: normal; }
.hruler ol { display: flex; width: 641px; margin-left: 52px; height: 8px; line-height: 8px; background: linear-gradient(to right, #dedede 74px, #fff 74px, #fff 572px, #dedede 572px); border: solid #ececec; border-width: 1px 0; align-items: center; }
.hruler li { flex: 1 1 0; display: flex; justify-content: space-between; font-size: 6px; }
.hruler li::before, .vruler li::before { content: "· ı ·"; color: #aaa; padding-left: 6px; }
.hruler .part { flex: 0 0 18px; }
.hruler .part::before { padding: 0; }
.indent { position: absolute; left: 136px; top: 4px; }
.indent.right { left: 633px; }
.canvas { flex: 1; min-height: 0; position: relative; display: flex; overflow: hidden; background: linear-gradient(#fff, #f0f0f0); }
.vruler { width: 8px; flex: none; margin: -8px 0 0 5px; height: 355px; display: flex; flex-direction: column; background: #fff; border: solid #ddd; border-width: 0 1px; }
.vruler li { flex: 1 1 0; display: flex; justify-content: space-between; flex-direction: row-reverse; writing-mode: vertical-rl; transform: rotate(180deg); line-height: 7px; font-size: 6px; }
.page { width: 640px; flex: none; margin-left: 53px; padding: 0 73px; background: #fff; border: solid #d6d6d6; border-width: 0 1px; overflow: hidden; font-family: Lato, sans-serif; font-size: 11px; font-variant-ligatures: none; color: #000; }
.page li { height: 16px; line-height: 16px; padding-left: 38px; position: relative; white-space: nowrap; }
.page li::before { content: ""; position: absolute; left: 19px; top: 50%; margin-top: -2px; width: 5px; height: 5px; border-radius: 50%; background: #000; }
.page .big { font-size: 12px; }
.page .tall { height: 21px; display: flex; align-items: center; }
.math { font-family: "Liberation Serif", serif; font-size: 13px; }
.frac { display: inline-flex; flex-direction: column; vertical-align: middle; text-align: center; font-family: "DejaVu Serif", serif; font-size: 8px; line-height: 10px; margin: 0 2px; }
.frac > span:first-child { border-bottom: 1px solid #000; }
.page h3 { font-size: 11px; line-height: 12px; font-weight: 700; }
.page p { font-size: 11px; line-height: 12px; margin-top: 12px; white-space: nowrap; }
.page .gantt + p { margin-top: 10px; }
.page .q { padding-left: 15px; }
.gantt { margin-top: 11px; width: 462px; border-collapse: collapse; table-layout: fixed; border: 1px solid #000; font-size: 6px; }
.gantt .name { width: 116px; }
.gantt th, .gantt td { height: 11px; padding: 0; border: 1px solid #222; line-height: 8px; font-weight: 400; white-space: nowrap; }
.gantt tbody th { text-align: left; padding-left: 1px; }
.gantt thead th { font-size: 7px; text-align: center; }
.gantt .hours th { font-size: 6px; }
.gantt .hours .act { font-size: 8px; }
.gantt .r { background: #ff1e00; }
.ibeam { position: absolute; left: 645px; top: 232px; }
.status { position: relative; flex: none; height: 13px; display: flex; align-items: center; gap: 10px; padding: 0 5px; color: #fff; background: #2755a0; }
.status svg { fill: none; stroke: #fff; stroke-width: .7; }
.views { margin: 0 -5px 0 auto; display: flex; gap: 12px; }
.status b { font-size: 8px; }
.zoom { width: 56px; height: 7px; margin: 0 -6px; background: linear-gradient(#fff, #fff) 31px 0 / 2px 7px no-repeat, linear-gradient(#a9bcdc, #a9bcdc) 0 3px / 100% 1px no-repeat; }
.rtask { flex: none; height: 21px; display: flex; align-items: center; background: linear-gradient(to right, #dfe5ee, #cfdff0 50%, #d8e2ef); color: #333; }
.start { width: 28px; align-self: stretch; display: flex; align-items: center; justify-content: center; background: #cdd8e9; color: #111; }
.rsearch { width: 160px; align-self: stretch; padding-left: 6px; display: flex; align-items: center; gap: 6px; background: #fff; font-size: 7px; }
.mill { margin: auto 2px 0 auto; }
.apps { display: flex; align-self: stretch; }
.apps svg { width: 28px; height: 21px; padding: 4px 0; }
.apps svg[viewBox="0 0 28 21"] { padding: 0; }
.apps .ln { padding: 5px 0; stroke-width: 1.2; }
.apps .sel { background: #edf2f9; }
.tray { margin-left: auto; padding-right: 13px; display: flex; align-items: center; gap: 3px; }
.tray svg { width: 10px; height: 10px; }
.tray .s { fill: none; stroke: #333; }
.tray em { font-style: normal; padding: 0 5px; line-height: 10px; text-align: center; }

/* Tiles */
.tiles { flex: none; width: 156px; margin: 13px 5px 0 0; display: flex; flex-direction: column; gap: 4px; }
.tile { position: relative; height: 86px; display: flex; align-items: center; justify-content: center; border: 1px solid #d6d6d6; border-radius: 5px; }
.t1 { background: radial-gradient(circle at 10% 60%, #f0dce4, transparent 60%), linear-gradient(150deg, #efe9ef, #f5e3e4 50%, #f5eeee); border-color: #dfcdd0; }
.t2 { background: radial-gradient(circle at 80% 40%, #e8e9ed, transparent 60%), linear-gradient(160deg, #f2f3f3, #eaeceb 60%, #f4f0e0); }
.t3 { background: radial-gradient(circle at 25% 90%, #dfe6f3, transparent 60%), linear-gradient(160deg, #f1f2f0, #e7eff1 50%, #e2f2ec); border-color: #ccd8dc; }
.t4 { background: radial-gradient(circle at 5% 65%, #e8eaf1, transparent 60%), linear-gradient(160deg, #f5e8ef, #f2e5f1 60%, #f5eaf0); }
.t5 { background: radial-gradient(circle at 35% 5%, #e0f3e7, transparent 60%), linear-gradient(150deg, #eaf4ee, #eff0ec 55%, #f5eff1); border-color: #d2dcd5; }
.avatar { position: relative; flex: none; width: 32px; height: 32px; border-radius: 50%; display: flex; align-items: center; justify-content: center; font-size: 11px; font-weight: 600; }
.tile .avatar { width: 48px; height: 48px; font-size: 18px; box-shadow: 0 1px 3px rgba(0,0,0,.2); }
.sr { background: #d5e3ea; color: #1f3f4d; }
.ac { background: #d0ebdd; color: #0c5133; }
.rr { background: #f8e9ca; color: #75500a; }
.dr { background: #fbddd8; color: #7a2a1e; }
.mr { background: #e9d0e0; color: #5a1d50; }
.me { background: #d9f0f3; color: #235e64; }
.tile .me { box-shadow: none; }
.muted { position: absolute; left: 3px; bottom: 3px; width: 28px; height: 24px; border-radius: 4px; background: #6e6e6e; color: #fff; display: flex; align-items: center; justify-content: center; }
.muted svg { width: 14px; height: 14px; }
.pager { height: 32px; padding-bottom: 2px; display: flex; align-items: center; justify-content: center; gap: 11px; font-size: 13px; }
.pager svg { stroke-width: 1.1; }

/* Participants */
.people { flex: none; width: 113px; overflow: hidden; border-left: 1px solid #dcdcdc; white-space: nowrap; }
.people h2 { height: 61px; padding: 4px 0 0 20px; line-height: 56px; font-size: 14px; font-weight: 700; border-bottom: 1px solid #dcdcdc; }
.people-in { padding: 16px 0 0 20px; }
.people input { display: block; width: 260px; height: 32px; padding-left: 13px; background: #fff; border-radius: 4px; font-size: 13px; }
.invite { width: 260px; height: 32px; margin-top: 10px; padding-left: 82px; justify-content: flex-start; background: #fff; border: 1px solid #c7c7c7; border-radius: 4px; }
.people h4 { height: 42px; margin-left: -11px; display: flex; align-items: center; gap: 9px; padding-top: 6px; font-size: 11px; font-weight: 400; color: #424242; }
.people h4 svg { width: 10px; height: 10px; stroke-width: 1.2; }
.people ul { padding-left: 1px; }
.people li { height: 48px; display: flex; align-items: center; gap: 12px; font-size: 13px; }
.people ul + h4 { padding-top: 0; height: 38px; }
.presence { position: absolute; right: 0; bottom: -4px; width: 10px; height: 10px; border: 1px solid #c239b3; border-radius: 50%; background: radial-gradient(#c239b3 30%, #f4f4f4 35%); }

/* Windows taskbar */
.taskbar { flex: none; height: 40px; display: flex; background: #1f3328; color: #fff; }
.taskbar button { width: 48px; height: 40px; }
.taskbar .find { stroke-width: 2.4; }
.pinned { display: flex; gap: 1px; margin-left: 3px; }
.pinned svg { width: 24px; height: 24px; }
.pinned .running { box-shadow: inset 4px 0 #1f3328, inset -4px 0 #1f3328, inset 0 -2px #76b9ed; }
.pinned .active { background: #4c5c53; box-shadow: inset 0 -2px #76b9ed; }
.systray { margin: 0 -16px 0 auto; display: flex; align-items: center; gap: 8px; }
```
